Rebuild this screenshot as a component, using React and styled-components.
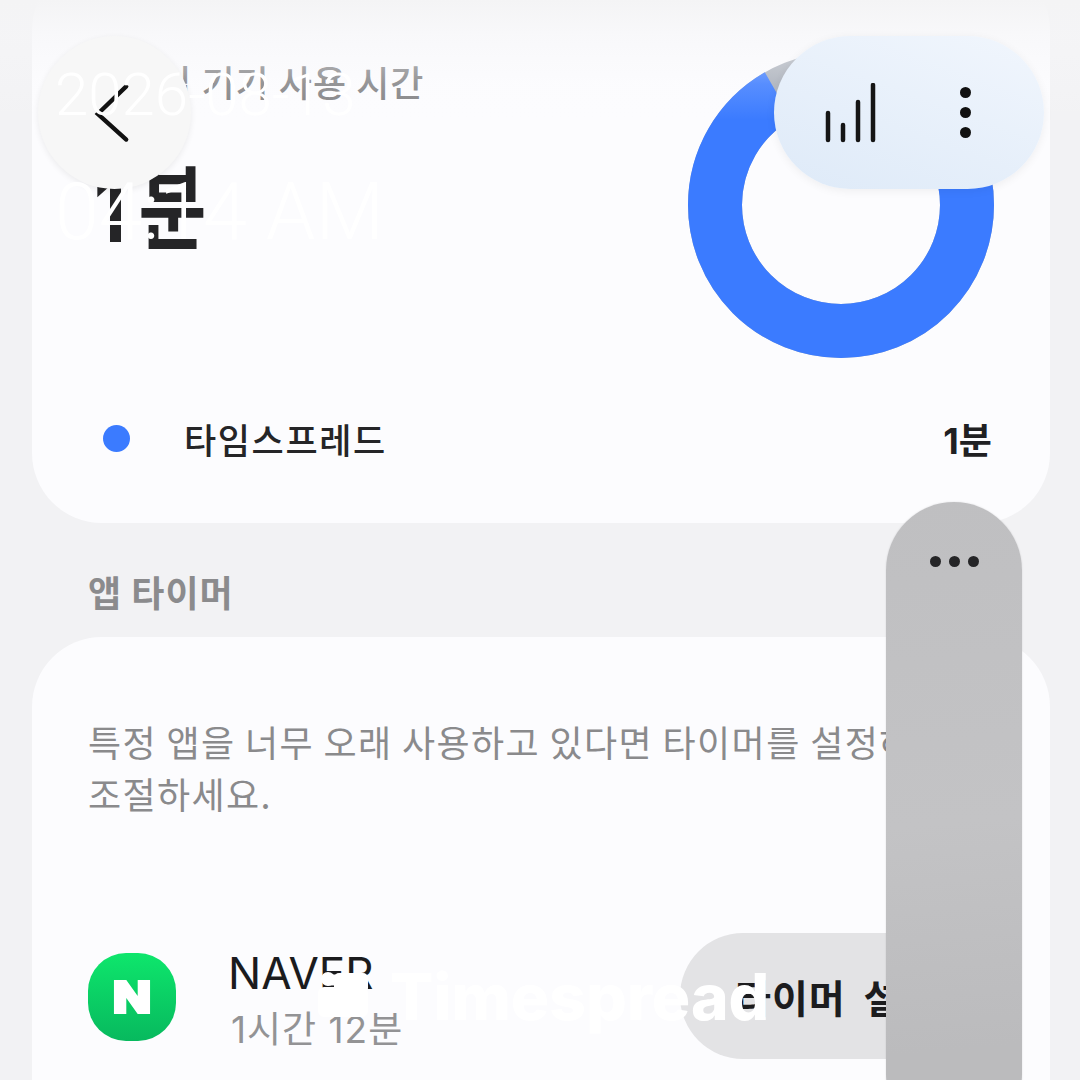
import React from "react";
import styled, { createGlobalStyle } from "styled-components";

const GlobalStyle = createGlobalStyle`
  html, body {
    margin: 0;
    padding: 0;
    background: #f2f2f4;
  }
  * {
    box-sizing: border-box;
  }
`;

const FONT = `"Noto Sans CJK KR", "Noto Sans", sans-serif`;
const NUMERIC_FONT = `"Inter", "Noto Sans CJK KR", sans-serif`;

const Screen = styled.div`
  position: relative;
  width: 1080px;
  height: 1080px;
  overflow: hidden;
  background: #f2f2f4;
  font-family: ${FONT};
`;
const Content = styled.div`
  display: flex;
  flex-direction: column;
  padding: 0 30px 0 32px;
  margin-top: -40px;
`;
const Card = styled.section`
  background: #fcfcfe;
  border-radius: 70px;
`;
const UsageCard = styled(Card)`
  height: 563px;
  padding: 98px 58px 0 58px;
`;
const TimerCard = styled(Card)`
  height: 560px;
  padding: 78px 0 0 56px;
`;
const UsageTop = styled.div`
  display: flex;
  justify-content: space-between;
`;
const UsageTitle = styled.div`
  font-size: 36px;
  font-weight: 500;
  line-height: 46px;
  letter-spacing: 1px;
  color: #838385;
  white-space: nowrap;
`;
const UsageValue = styled.div`
  display: flex;
  align-items: center;
  margin: 57px 0 0 4px;
  font-family: ${NUMERIC_FONT};
  font-size: 82px;
  line-height: 96px;
  font-weight: 700;
  color: #252527;
  transform: scale(0.9, 1.14);
  transform-origin: left center;
`;
const ValueUnit = styled.span`
  margin-left: 14px;
`;
const DonutSvg = styled.svg`
  display: block;
  flex: none;
  width: 306px;
  height: 306px;
  margin: -6px -2px 0 0;
`;
const LegendRow = styled.div`
  display: flex;
  align-items: center;
  margin-top: 55px;
  height: 50px;
  padding-left: 13px;
`;
const LegendDot = styled.span`
  width: 27px;
  height: 27px;
  border-radius: 50%;
  background: ${({ $color }) => $color};
`;
const LegendName = styled.span`
  margin-left: 54px;
  font-size: 35px;
  font-weight: 500;
  color: #252527;
  letter-spacing: 1.6px;
`;
const LegendValue = styled.span`
  margin-left: auto;
  font-family: ${NUMERIC_FONT};
  font-size: 36px;
  font-weight: 700;
  color: #202022;
`;
const SectionLabel = styled.h2`
  margin: 0;
  height: 114px;
  padding: 44px 0 0 56px;
  font-size: 36px;
  line-height: 48px;
  letter-spacing: 1px;
  font-weight: 700;
  color: #8b8b8d;
`;
const TimerHint = styled.p`
  margin: 0;
  font-size: 36px;
  line-height: 52px;
  font-weight: 400;
  color: #8a8a8c;
  white-space: nowrap;
  letter-spacing: 1.4px;
`;
const AppRow = styled.div`
  display: flex;
  align-items: center;
  margin-top: 114px;
  height: 126px;
`;
const AppIcon = styled.div`
  flex: none;
  display: flex;
  align-items: center;
  justify-content: center;
  width: 88px;
  height: 88px;
  margin-top: 2px;
  border-radius: 38px;
  background: linear-gradient(180deg, #0ee66c 0%, #07b95e 100%);
`;
const AppInfo = styled.div`
  display: flex;
  flex-direction: column;
  margin-left: 52px;
  padding-top: 10px;
  width: 452px;
`;
const AppName = styled.div`
  font-family: "Inter", "Noto Sans", sans-serif;
  font-size: 44px;
  line-height: 52px;
  font-weight: 400;
  color: #1b1b1d;
`;
const AppTime = styled.div`
  margin-top: 6px;
  padding-left: 3px;
  font-family: ${NUMERIC_FONT};
  font-size: 37px;
  line-height: 50px;
  letter-spacing: 1px;
  color: #939395;
`;
const TimerButton = styled.button`
  flex: none;
  width: 330px;
  height: 126px;
  padding: 0 0 0 55px;
  border: none;
  border-radius: 63px;
  background: #e3e3e5;
  font-family: ${FONT};
  font-size: 39px;
  font-weight: 700;
  letter-spacing: 1px;
  word-spacing: 8px;
  text-align: left;
  white-space: nowrap;
  color: #1c1c1e;
`;
const TopFade = styled.div`
  position: absolute;
  top: 0;
  left: 0;
  right: 0;
  height: 120px;
  background: linear-gradient(
    180deg,
    #f4f4f5 0%,
    rgba(246, 246, 248, 0.6) 30%,
    rgba(250, 250, 252, 0.15) 70%,
    rgba(252, 252, 254, 0) 100%
  );
`;
const FloatingBack = styled.button`
  position: absolute;
  top: 36px;
  left: 38px;
  width: 153px;
  height: 153px;
  padding: 0 6px 0 0;
  border: none;
  border-radius: 50%;
  background: #f7f7f7;
  box-shadow: 0 2px 6px rgba(0, 0, 0, 0.07);
  display: flex;
  align-items: center;
  justify-content: center;
`;
const FloatingActions = styled.div`
  position: absolute;
  top: 36px;
  left: 774px;
  width: 270px;
  height: 153px;
  border-radius: 77px;
  background: linear-gradient(200deg, #f1f6fd 0%, #deeaf8 100%);
  box-shadow: 0 2px 10px rgba(0, 0, 0, 0.06);
  display: flex;
  align-items: center;
  justify-content: space-between;
  padding: 0 73px 0 51px;
`;
const VDots = styled.div`
  display: flex;
  flex-direction: column;
  gap: 9px;
`;
const Dot = styled.span`
  display: block;
  width: ${({ $size }) => $size}px;
  height: ${({ $size }) => $size}px;
  border-radius: 50%;
  background: ${({ $color }) => $color};
`;
const SideHandle = styled.div`
  position: absolute;
  top: 502px;
  left: 886px;
  width: 136px;
  height: 640px;
  border-radius: 68px;
  background: linear-gradient(175deg, #bfbfc1 0%, #c3c3c5 50%, #bbbbbd 85%);
  box-shadow: 0 0 2px rgba(0, 0, 0, 0.12);
  display: flex;
  justify-content: center;
  gap: 8px;
  padding-top: 54px;
`;
const StampDate = styled.div`
  position: absolute;
  top: 60px;
  left: 55px;
  font-family: "Roboto", sans-serif;
  font-size: 60px;
  line-height: 70px;
  font-weight: 300;
  color: #ffffff;
  white-space: nowrap;
`;
const StampTime = styled.div`
  position: absolute;
  top: 166px;
  left: 55px;
  font-family: "Roboto", sans-serif;
  font-size: 79px;
  line-height: 92px;
  font-weight: 300;
  color: #ffffff;
  white-space: nowrap;
`;
const Watermark = styled.div`
  position: absolute;
  top: 958px;
  left: 318px;
  display: flex;
  align-items: center;
  gap: 20px;
  font-family: "Inter", sans-serif;
  font-size: 64px;
  line-height: 78px;
  font-weight: 800;
  color: #ffffff;
  white-space: nowrap;
`;

function UsageDonut() {
  const radius = 126;
  const length = 2 * Math.PI * radius;
  const blue = (length * 330) / 360;
  return (
    <DonutSvg viewBox="0 0 306 306">
      <circle cx="153" cy="153" r={radius} fill="none" stroke="#a9afb9" strokeWidth="54" />
      <circle
        cx="153"
        cy="153"
        r={radius}
        fill="none"
        stroke="#3b7bff"
        strokeWidth="54"
        strokeDasharray={`${blue} ${length - blue}`}
        transform="rotate(-90 153 153)"
      />
    </DonutSvg>
  );
}

function App() {
  return (
    <Screen>
      <GlobalStyle />
      <Content>
        <UsageCard>
          <UsageTop>
            <div>
              <UsageTitle>일주일 기기 사용 시간</UsageTitle>
              <UsageValue>
                <span>1</span>
                <ValueUnit>분</ValueUnit>
              </UsageValue>
            </div>
            <UsageDonut />
          </UsageTop>
          <LegendRow>
            <LegendDot $color="#3b7bff" />
            <LegendName>타임스프레드</LegendName>
            <LegendValue>1분</LegendValue>
          </LegendRow>
        </UsageCard>
        <SectionLabel>앱 타이머</SectionLabel>
        <TimerCard>
          <TimerHint>
            특정 앱을 너무 오래 사용하고 있다면 타이머를 설정하여
            <br />
            조절하세요.
          </TimerHint>
          <AppRow>
            <AppIcon>
              <svg width="38" height="38" viewBox="0 0 40 38">
                <path d="M1 1h13l12 17V1h13v36H26L14 20v17H1z" fill="#fff" />
              </svg>
            </AppIcon>
            <AppInfo>
              <AppName>NAVER</AppName>
              <AppTime>1시간 12분</AppTime>
            </AppInfo>
            <TimerButton>타이머 설정</TimerButton>
          </AppRow>
        </TimerCard>
      </Content>

      <TopFade />
      <FloatingBack aria-label="back">
        <svg width="38" height="62" viewBox="0 0 40 64">
          <path d="M35 4 5 33l30 27" fill="none" stroke="#111" strokeWidth="4.5" strokeLinecap="round" />
        </svg>
      </FloatingBack>
      <FloatingActions>
        <svg width="52" height="60" viewBox="0 0 52 60">
          <g stroke="#151515" strokeWidth="4.5" strokeLinecap="round">
            <path d="M3 30v27" />
            <path d="M18 42v15" />
            <path d="M33 19v38" />
            <path d="M48 2v55" />
          </g>
        </svg>
        <VDots>
          <Dot $size={11} $color="#111" />
          <Dot $size={11} $color="#111" />
          <Dot $size={11} $color="#111" />
        </VDots>
      </FloatingActions>
      <SideHandle>
        <Dot $size={11} $color="#252527" />
        <Dot $size={11} $color="#252527" />
        <Dot $size={11} $color="#252527" />
      </SideHandle>

      <StampDate>2026-08-13</StampDate>
      <StampTime>04:14 AM</StampTime>
      <Watermark>
        <svg width="52" height="52" viewBox="0 0 52 52">
          <circle cx="10" cy="8" r="7" fill="#fff" />
          <rect x="0" y="16" width="50" height="30" rx="6" fill="#fff" />
          <rect x="16" y="2" width="34" height="20" rx="5" fill="#fff" />
        </svg>
        Timespread
      </Watermark>
    </Screen>
  );
}

export default App;
